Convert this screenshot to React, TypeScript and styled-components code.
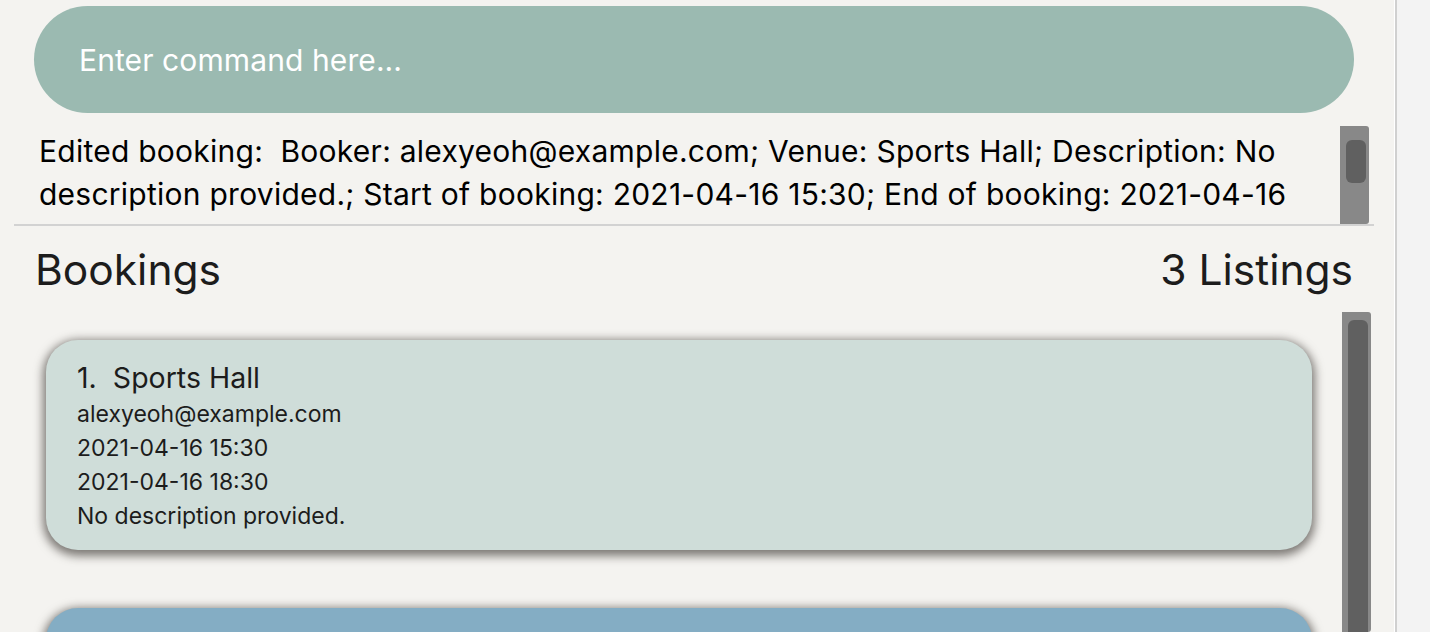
import React from "react";
import styled, { createGlobalStyle } from "styled-components";

const GlobalStyle = createGlobalStyle`
  html, body {
    margin: 0;
    padding: 0;
    background: #f4f3f0;
    font-family: Inter, "Noto Sans", "Liberation Sans", sans-serif;
    overflow: hidden;
  }
`;

const Window = styled.div`
  display: flex;
  width: 1430px;
  height: 632px;
  overflow: hidden;
`;

const Main = styled.div`
  width: 1395px;
  display: flex;
  flex-direction: column;
  background: #f4f3f0;
`;

const SideEdge = styled.div`
  width: 35px;
  border-left: 1px solid #ffffff;
  box-shadow: inset 2px 0 0 #d0d0d0;
  background: #f3f3f3;
`;

const CommandBox = styled.div`
  margin: 6px 0 0 34px;
  width: 1320px;
  height: 107px;
  border-radius: 54px;
  background: #9bbab1;
  display: flex;
  align-items: center;
  padding-left: 45px;
  box-sizing: border-box;
  color: #ffffff;
  font-size: 30px;
  letter-spacing: 0.1px;
`;

const ResultArea = styled.div`
  margin: 11px 0 0 14px;
  width: 1360px;
  height: 100px;
  display: flex;
  border-bottom: 2px solid #d2d2d2;
`;

const ResultText = styled.div`
  flex: 1;
  padding: 6px 0 0 25px;
  font-size: 30px;
  line-height: 43px;
  letter-spacing: 0.25px;
  color: #000000;
  overflow: hidden;
`;

const ScrollTrack = styled.div<{ $top: number; $thumb: number; $right: number }>`
  width: 29px;
  margin-right: ${(p) => p.$right}px;
  margin-top: 2px;
  background: #888888;
  border-radius: 0 3px 3px 0;
  position: relative;
  flex-shrink: 0;

  &::after {
    content: "";
    position: absolute;
    left: 6px;
    right: 3px;
    top: ${(p) => p.$top}px;
    height: ${(p) => p.$thumb}px;
    background: #606060;
    border-radius: 6px;
  }
`;

const Header = styled.div`
  display: flex;
  justify-content: space-between;
  align-items: center;
  height: 84px;
  padding: 4px 41px 0 35px;
  box-sizing: border-box;
  font-size: 42.5px;
  line-height: 50px;
  color: #1c1c1c;
`;

const ListArea = styled.div`
  flex: 1;
  display: flex;
  min-height: 0;
`;

const Cards = styled.div`
  flex: 1;
  padding: 30px 30px 0 46px;
  display: flex;
  flex-direction: column;
  gap: 58px;
  overflow: hidden;
`;

const Card = styled.div<{ $bg: string }>`
  flex-shrink: 0;
  height: 210px;
  border-radius: 32px;
  background: ${(p) => p.$bg};
  box-shadow: 0 3px 10px 3px rgba(45, 40, 35, 0.6);
  padding: 21px 31px 0;
  box-sizing: border-box;
  color: #1c1c1c;
`;

const CardTitle = styled.div`
  font-size: 28.5px;
  line-height: 34px;
  margin-bottom: 2px;
`;

const CardLine = styled.div`
  font-size: 23px;
  line-height: 34px;
`;

const bookings = [
  {
    venue: "Sports Hall",
    booker: "alexyeoh@example.com",
    start: "2021-04-16 15:30",
    end: "2021-04-16 18:30",
    desc: "No description provided.",
    bg: "#cfddd9",
  },
  {
    venue: "Victoria Hall",
    booker: "berniceyu@example.com",
    start: "2021-04-17 10:00",
    end: "2021-04-17 12:00",
    desc: "No description provided.",
    bg: "#84adc4",
  },
];

const App: React.FC = () => {
  return (
    <Window>
      <GlobalStyle />
      <Main>
        <CommandBox>Enter command here...</CommandBox>
        <ResultArea>
          <ResultText>
            Edited booking:&nbsp; Booker: alexyeoh@example.com; Venue: Sports
            Hall; Description: No description provided.; Start of booking:
            2021-04-16 15:30; End of booking: 2021-04-16 18:30
          </ResultText>
          <ScrollTrack $top={14} $thumb={43} $right={5} />
        </ResultArea>
        <Header>
          <span>Bookings</span>
          <span>3 Listings</span>
        </Header>
        <ListArea>
          <Cards>
            {bookings.map((b, i) => (
              <Card key={b.venue} $bg={b.bg}>
                <CardTitle>
                  {i + 1}.&nbsp; {b.venue}
                </CardTitle>
                <CardLine>{b.booker}</CardLine>
                <CardLine>{b.start}</CardLine>
                <CardLine>{b.end}</CardLine>
                <CardLine>{b.desc}</CardLine>
              </Card>
            ))}
          </Cards>
          <ScrollTrack $top={8} $thumb={400} $right={23} />
        </ListArea>
      </Main>
      <SideEdge />
    </Window>
  );
};

export default App;
